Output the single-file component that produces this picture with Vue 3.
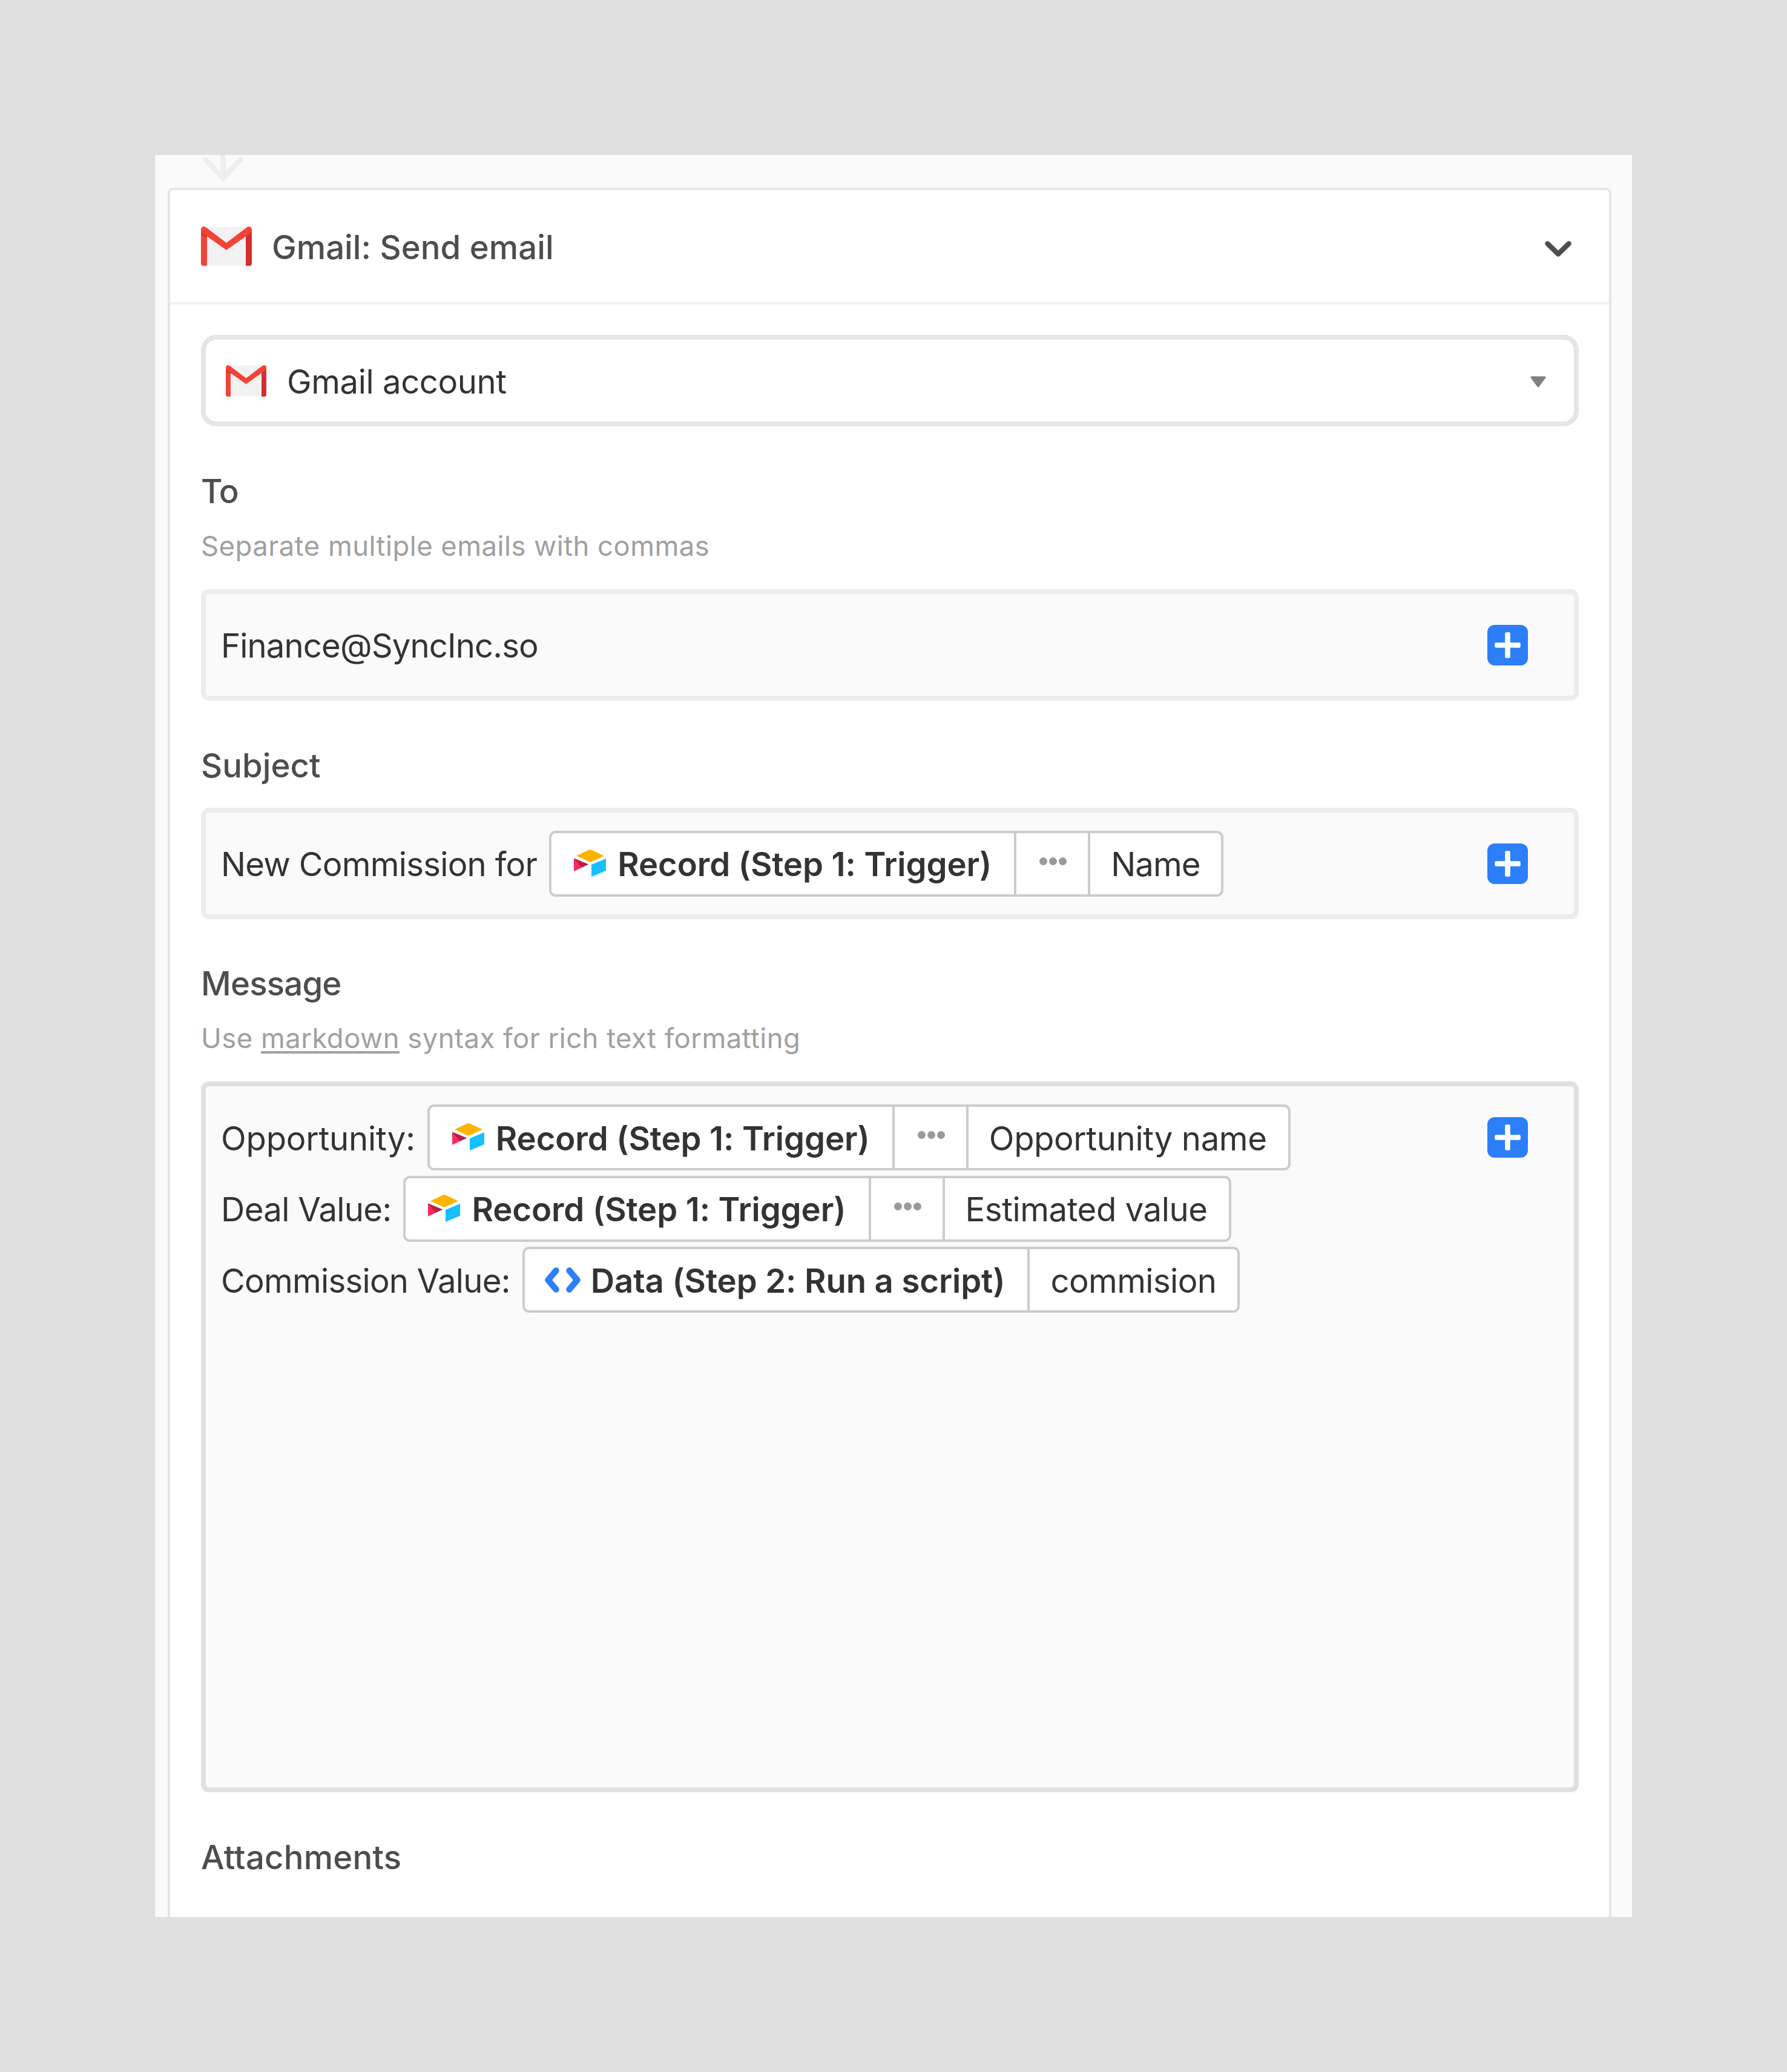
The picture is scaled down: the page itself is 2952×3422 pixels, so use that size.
<script setup>
// tracking: letter spacing in px for the lead text and the token value
const rows = [
  { label: 'Opportunity:', icon: 'airtable', source: 'Record (Step 1: Trigger)', more: true, value: 'Opportunity name', tracking: [-0.2, -0.4] },
  { label: 'Deal Value:', icon: 'airtable', source: 'Record (Step 1: Trigger)', more: true, value: 'Estimated value', tracking: [-0.7, -0.45] },
  { label: 'Commission Value:', icon: 'code', source: 'Data (Step 2: Run a script)', more: false, value: 'commision', tracking: [-0.75, -0.6] }
]
const subject = [
  { label: 'New Commission for', icon: 'airtable', source: 'Record (Step 1: Trigger)', more: true, value: 'Name', tracking: [-0.75, -1] }
]
const fields = [
  { id: 'to', title: 'To', hint: ['Separate multiple emails with commas'], text: 'Finance@SyncInc.so', rows: [] },
  { id: 'subject', title: 'Subject', rows: subject },
  { id: 'message', title: 'Message', hint: ['Use ', 'markdown', ' syntax for rich text formatting'], rows }
]
</script>

<template>
  <main class="page">
    <section class="panel">
      <svg class="arrow" viewBox="0 0 72 46">
        <path d="M35.5 0V38M4 5L35.5 38L67 5" />
      </svg>

      <div class="card">
        <header class="header">
          <svg class="gmail" viewBox="0 0 84 65">
            <rect x="5" y="0.5" width="74" height="64" fill="#f2f2f2" />
            <path d="M0 6H10V65H4Q0 65 0 61Z" fill="#f44336" />
            <path d="M74 6H84V61Q84 65 80 65H74Z" fill="#d32f2f" />
            <path d="M0 9L10 13V19L1 13Z" fill="#d32f2f" />
            <path d="M8 1.2L42 27L76 1.2C79.500 -1.200 84 0.800 84 5C84 8 83 10 81 11.500L42 39L3 11.500C1 10 0 8 0 5C0 0.800 4.500 -1.200 8 1.200Z" fill="#f44336" />
          </svg>
          <span class="title">Gmail: Send email</span>
          <svg class="chevron" viewBox="0 0 44 27">
            <path d="M4.500 4.500L22 21.500L39.500 4.500" />
          </svg>
        </header>

        <div class="body">
          <div class="select">
            <svg class="gmail small" viewBox="0 0 84 65">
              <rect x="5" y="0.5" width="74" height="64" fill="#f2f2f2" />
              <path d="M0 6H10V65H4Q0 65 0 61Z" fill="#f44336" />
              <path d="M74 6H84V61Q84 65 80 65H74Z" fill="#d32f2f" />
              <path d="M0 9L10 13V19L1 13Z" fill="#d32f2f" />
              <path d="M8 1.2L42 27L76 1.2C79.500 -1.200 84 0.800 84 5C84 8 83 10 81 11.500L42 39L3 11.500C1 10 0 8 0 5C0 0.800 4.500 -1.200 8 1.200Z" fill="#f44336" />
            </svg>
            <span class="account">Gmail account</span>
            <svg class="caret" viewBox="0 0 26 19">
              <path d="M2 2H24L13 17Z" />
            </svg>
          </div>

          <div v-for="field in fields" :key="field.id" class="field" :class="field.id">
            <div class="label">{{ field.title }}</div>
            <div v-if="field.hint" class="hint">
              <template v-for="(part, i) in field.hint" :key="i">
                <a v-if="i === 1">{{ part }}</a>
                <template v-else>{{ part }}</template>
              </template>
            </div>
            <div class="box">
              <div class="lines">
                <div v-if="field.text" class="line">
                  <span class="mail">{{ field.text }}</span>
                </div>
                <div v-for="row in field.rows" :key="row.label" class="line">
                  <span :style="{ letterSpacing: row.tracking[0] + 'px' }">{{ row.label }}</span>
                  <div class="token">
                    <div class="source">
                      <svg v-if="row.icon === 'airtable'" class="airtable" viewBox="0 0 53 45">
                        <path d="M4 10.500L25 0.600Q27 0 29 0.600L50 10.500L28 20.500Q27 21 26 20.500Z" fill="#fcb400" />
                        <path d="M29 25L53 15V35L29 45Z" fill="#18bfff" />
                        <path d="M0 14.500L24 24.500L0 36Z" fill="#f82b60" />
                        <path d="M0 14.500L24 24.500L13 29.800Z" fill="#ba1e45" />
                      </svg>
                      <svg v-else class="code" viewBox="0 0 59 42">
                        <path d="M18.500 5.500L5.500 21L18.500 36.500M40.500 5.500L53.500 21L40.500 36.500" />
                      </svg>
                      <span>{{ row.source }}</span>
                    </div>
                    <div v-if="row.more" class="more"><i></i><i></i><i></i></div>
                    <div class="value" :style="{ letterSpacing: row.tracking[1] + 'px' }">
                      <span>{{ row.value }}</span>
                    </div>
                  </div>
                </div>
              </div>
              <svg class="plus" viewBox="0 0 67 67">
                <rect width="67" height="67" rx="12" fill="#2d7ff9" />
                <rect x="12.300" y="29.200" width="42.500" height="8.600" rx="2" fill="#fff" />
                <rect x="29.200" y="12.300" width="8.600" height="42.500" rx="2" fill="#fff" />
              </svg>
            </div>
          </div>

          <div class="field attachments">
            <div class="label">Attachments</div>
          </div>
        </div>
      </div>
    </section>
  </main>
</template>

<style>
body {
  margin: 0;
  background: #e0e0e0;
}
</style>

<style scoped>
* {
  box-sizing: border-box;
}

.page {
  height: 3422px;
  padding: 256px;
  background: #e0e0e0;
  font-family: Inter, "Liberation Sans", sans-serif;
  font-size: 54.5px;
  line-height: 66px;
  color: #333;
  white-space: nowrap;
}

.panel {
  height: 2910px;
  padding: 0 34px 0 21px;
  background: #fafafa;
  overflow: hidden;
}

svg {
  display: block;
  flex: none;
}

.arrow {
  width: 72px;
  height: 46px;
  margin: 0 0 8px 56px;
}

.arrow path {
  fill: none;
  stroke: #eee;
  stroke-width: 8.5;
}

.card {
  height: 2900px;
  border: 4px solid #e5e5e5;
  border-radius: 9px;
  background: #fff;
}

.header {
  display: flex;
  align-items: center;
  height: 189px;
  padding: 0 62px 0 51px;
  border-bottom: 4px solid #f2f2f2;
}

.gmail {
  width: 84px;
  height: 65px;
}

.gmail.small {
  width: 67px;
  height: 52px;
}

.title {
  flex: 1;
  margin: 3px 0 0 33px;
  font-weight: 500;
  color: #4d4d4d;
}

.chevron {
  width: 44px;
  height: 27px;
  margin-top: 9px;
}

.chevron path {
  fill: none;
  stroke: #4d4d4d;
  stroke-width: 8.5;
  stroke-linecap: round;
  stroke-linejoin: round;
}

.body {
  padding: 50px 50px 0 51px;
}

.select {
  display: flex;
  align-items: center;
  height: 151px;
  padding: 0 46px 0 33px;
  border: 8px solid #e5e5e5;
  border-radius: 25px;
}

.account {
  flex: 1;
  margin: 3px 0 0 34px;
  letter-spacing: -0.45px;
}

.caret {
  width: 26px;
  height: 19px;
  margin-top: 3px;
}

.caret path {
  fill: #808080;
  stroke: #808080;
  stroke-width: 3;
  stroke-linejoin: round;
}

.field {
  padding-top: 73px;
}

.message {
  padding-top: 72px;
}

.label {
  height: 66px;
  padding-top: 1px;
  font-weight: 500;
  color: #4d4d4d;
}

.to .label {
  letter-spacing: -1.5px;
}

.message .label {
  letter-spacing: -0.8px;
}

.attachments .label {
  letter-spacing: 0.2px;
}

.hint {
  height: 56px;
  margin: 30px 0 44px;
  padding-top: 1px;
  font-size: 45.5px;
  line-height: 56px;
  letter-spacing: 0.43px;
  color: #a0a0a0;
}

.hint a {
  text-decoration: underline;
  text-decoration-thickness: 4px;
  text-underline-offset: 5px;
}

.box {
  display: flex;
  align-items: center;
  justify-content: space-between;
  height: 184px;
  margin-top: 38px;
  padding: 0 76px 0 25px;
  border: 8px solid #ececec;
  border-radius: 13px;
  background: #fafafa;
}

.message .box {
  align-items: flex-start;
  height: 1174px;
  padding-top: 30px;
  border-color: #e0e0e0;
}

.message .plus {
  margin-top: 21px;
}

.plus {
  width: 67px;
  height: 67px;
}

.lines {
  display: flex;
  flex-direction: column;
  gap: 8.6px;
}

.line {
  display: flex;
  align-items: center;
  height: 109px;
}

.line span {
  padding-top: 2px;
}

.mail {
  letter-spacing: -0.9px;
}

.token {
  display: flex;
  height: 109px;
  margin-left: 20px;
  border: 4px solid #ccc;
  border-radius: 11px;
  background: #fff;
}

.source {
  display: flex;
  align-items: center;
  padding: 0 37px 0 37px;
  font-weight: 600;
  letter-spacing: -0.1px;
}

.airtable {
  width: 53px;
  height: 45px;
  margin: -2px 19px 0 0;
}

.code {
  width: 59px;
  height: 42px;
  margin: 0 17px 0 -4px;
}

.code path {
  fill: none;
  stroke: #2d7ff9;
  stroke-width: 10.5;
  stroke-linecap: round;
  stroke-linejoin: round;
}

.more {
  display: flex;
  align-items: center;
  gap: 3px;
  padding: 0 35px 8px 38px;
  border-left: 4px solid #ccc;
}

.more i {
  width: 13px;
  height: 13px;
  border-radius: 50%;
  background: #999;
}

.value {
  display: flex;
  align-items: center;
  padding: 0 35px 0 34px;
  border-left: 4px solid #ccc;
}
</style>
